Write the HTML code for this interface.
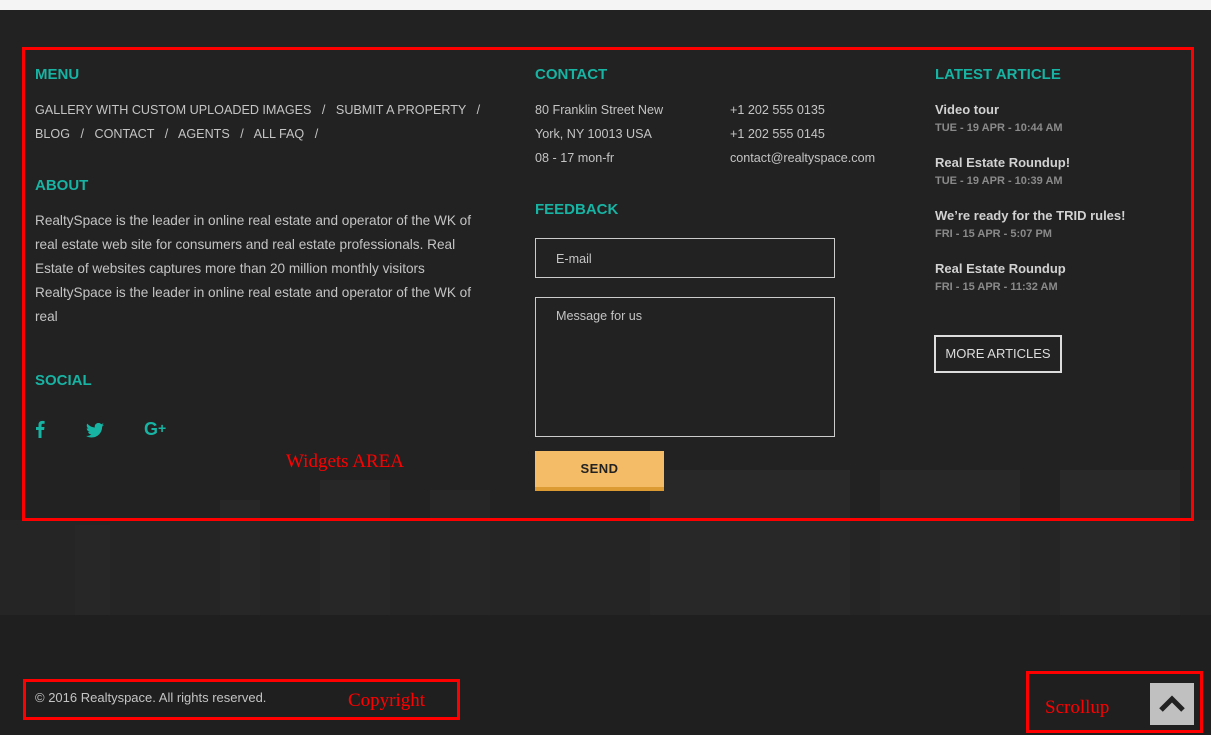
<!DOCTYPE html>
<html><head><meta charset="utf-8"><style>
*{margin:0;padding:0;box-sizing:border-box}
body{width:1211px;height:735px;overflow:hidden;background:#222;font-family:"Liberation Sans",sans-serif;position:relative;color:#bdbdbd}
.top{position:absolute;left:0;top:0;width:1211px;height:10px;background:#f4f4f4}
.a{position:absolute}
h3{position:absolute;color:#17b3a3;font-size:15px;font-weight:bold}
.t{font-size:12.6px;line-height:24px;color:#c4c4c4;white-space:nowrap}
.red{position:absolute;border:3px solid #f00}
.lbl{position:absolute;color:#f00;font-family:"Liberation Serif",serif;font-size:19px}
.art b{display:block;color:#d2d2d2;font-size:13px;line-height:16px}
.art span{display:block;color:#8a8a8a;font-size:11px;font-weight:bold;margin-top:4px}
.sky{position:absolute}
</style></head><body>
<div class="top"></div>
<div class="sky" style="left:0;top:520px;width:1211px;height:95px;background:#252525"></div>
<div class="sky" style="left:75px;top:525px;width:35px;height:90px;background:#272727"></div>
<div class="sky" style="left:220px;top:500px;width:40px;height:115px;background:#272727"></div>
<div class="sky" style="left:320px;top:480px;width:70px;height:135px;background:#272727"></div>
<div class="sky" style="left:430px;top:490px;width:60px;height:125px;background:#262626"></div>
<div class="sky" style="left:650px;top:470px;width:200px;height:145px;background:#282828"></div>
<div class="sky" style="left:880px;top:470px;width:140px;height:145px;background:#272727"></div>
<div class="sky" style="left:1060px;top:470px;width:120px;height:145px;background:#282828"></div>
<div class="sky" style="left:0;top:615px;width:1211px;height:120px;background:#1f1f1f"></div>

<div class="red" style="left:22px;top:47px;width:1172px;height:474px"></div>
<div class="lbl" style="left:286px;top:451px">Widgets AREA</div>

<h3 style="left:35px;top:66px">MENU</h3>
<div class="a t" style="left:35px;top:98px">GALLERY WITH CUSTOM UPLOADED IMAGES &nbsp; / &nbsp; SUBMIT A PROPERTY &nbsp; /<br>BLOG &nbsp; / &nbsp; CONTACT &nbsp; / &nbsp; AGENTS &nbsp; / &nbsp; ALL FAQ &nbsp; /</div>
<h3 style="left:35px;top:177px">ABOUT</h3>
<div class="a t" style="left:35px;top:209px;font-size:13.6px">RealtySpace is the leader in online real estate and operator of the WK of<br>real estate web site for consumers and real estate professionals. Real<br>Estate of websites captures more than 20 million monthly visitors<br>RealtySpace is the leader in online real estate and operator of the WK of<br>real</div>
<h3 style="left:35px;top:372px">SOCIAL</h3>
<svg class="a" style="left:35px;top:420px" width="10" height="18" viewBox="0 0 10 18"><path fill="#17b3a3" d="M6.5 18V10h2.6l.4-3H6.5V5.2c0-.9.3-1.5 1.5-1.5h1.6V1a21 21 0 0 0-2.3-.1C5 .9 3.5 2.3 3.5 4.9V7H1v3h2.5v8z"/></svg>
<svg class="a" style="left:86px;top:423px" width="18" height="15" viewBox="0 0 24 20"><path fill="#17b3a3" d="M24 2.4a10 10 0 0 1-2.8.8A5 5 0 0 0 23.3.4a10 10 0 0 1-3.1 1.2A4.9 4.9 0 0 0 11.8 6 14 14 0 0 1 1.7.9a4.9 4.9 0 0 0 1.5 6.6 4.9 4.9 0 0 1-2.2-.6 4.9 4.9 0 0 0 3.9 4.8 5 5 0 0 1-2.2.1 4.9 4.9 0 0 0 4.6 3.4A9.9 9.9 0 0 1 0 17.2 14 14 0 0 0 7.5 19.4c9 0 14-7.5 14-14v-.6A10 10 0 0 0 24 2.4z"/></svg>
<div class="a" style="left:144px;top:419px;color:#17b3a3;font-weight:bold;font-size:18px">G<span style="font-size:14px;vertical-align:2px">+</span></div>

<h3 style="left:535px;top:66px">CONTACT</h3>
<div class="a t" style="left:535px;top:98px">80 Franklin Street New<br>York, NY 10013 USA<br>08 - 17 mon-fr</div>
<div class="a t" style="left:730px;top:98px">+1 202 555 0135<br>+1 202 555 0145<br>contact@realtyspace.com</div>
<h3 style="left:535px;top:201px">FEEDBACK</h3>
<div class="a t" style="left:535px;top:238px;width:300px;height:40px;border:1px solid #ccc;padding:8px 20px">E-mail</div>
<div class="a t" style="left:535px;top:297px;width:300px;height:140px;border:1px solid #ccc;padding:6px 20px">Message for us</div>
<div class="a" style="left:535px;top:451px;width:129px;height:40px;background:#f4bc67;border-bottom:4px solid #dd9b33;color:#222;font-weight:bold;font-size:13px;text-align:center;line-height:36px;letter-spacing:0.5px">SEND</div>

<h3 style="left:935px;top:66px">LATEST ARTICLE</h3>
<div class="a art" style="left:935px;top:102px"><b>Video tour</b><span>TUE - 19 APR - 10:44 AM</span></div>
<div class="a art" style="left:935px;top:155px"><b>Real Estate Roundup!</b><span>TUE - 19 APR - 10:39 AM</span></div>
<div class="a art" style="left:935px;top:208px"><b>We’re ready for the TRID rules!</b><span>FRI - 15 APR - 5:07 PM</span></div>
<div class="a art" style="left:935px;top:261px"><b>Real Estate Roundup</b><span>FRI - 15 APR - 11:32 AM</span></div>
<div class="a" style="left:934px;top:335px;width:128px;height:38px;border:2px solid #ddd;color:#ddd;font-size:13px;text-align:center;line-height:34px">MORE ARTICLES</div>

<div class="red" style="left:23px;top:679px;width:437px;height:41px"></div>
<div class="a t" style="left:35px;top:686px;font-size:13px">© 2016 Realtyspace. All rights reserved.</div>
<div class="lbl" style="left:348px;top:690px">Copyright</div>

<div class="red" style="left:1026px;top:671px;width:177px;height:62px"></div>
<div class="lbl" style="left:1045px;top:697px">Scrollup</div>
<div class="a" style="left:1150px;top:683px;width:44px;height:42px;background:#c0c0c0"></div>
<svg class="a" style="left:1158px;top:694px" width="28" height="20" viewBox="0 0 28 20"><path d="M3 16 L14 5 L25 16" stroke="#222" stroke-width="5" fill="none"/></svg>
</body></html>
